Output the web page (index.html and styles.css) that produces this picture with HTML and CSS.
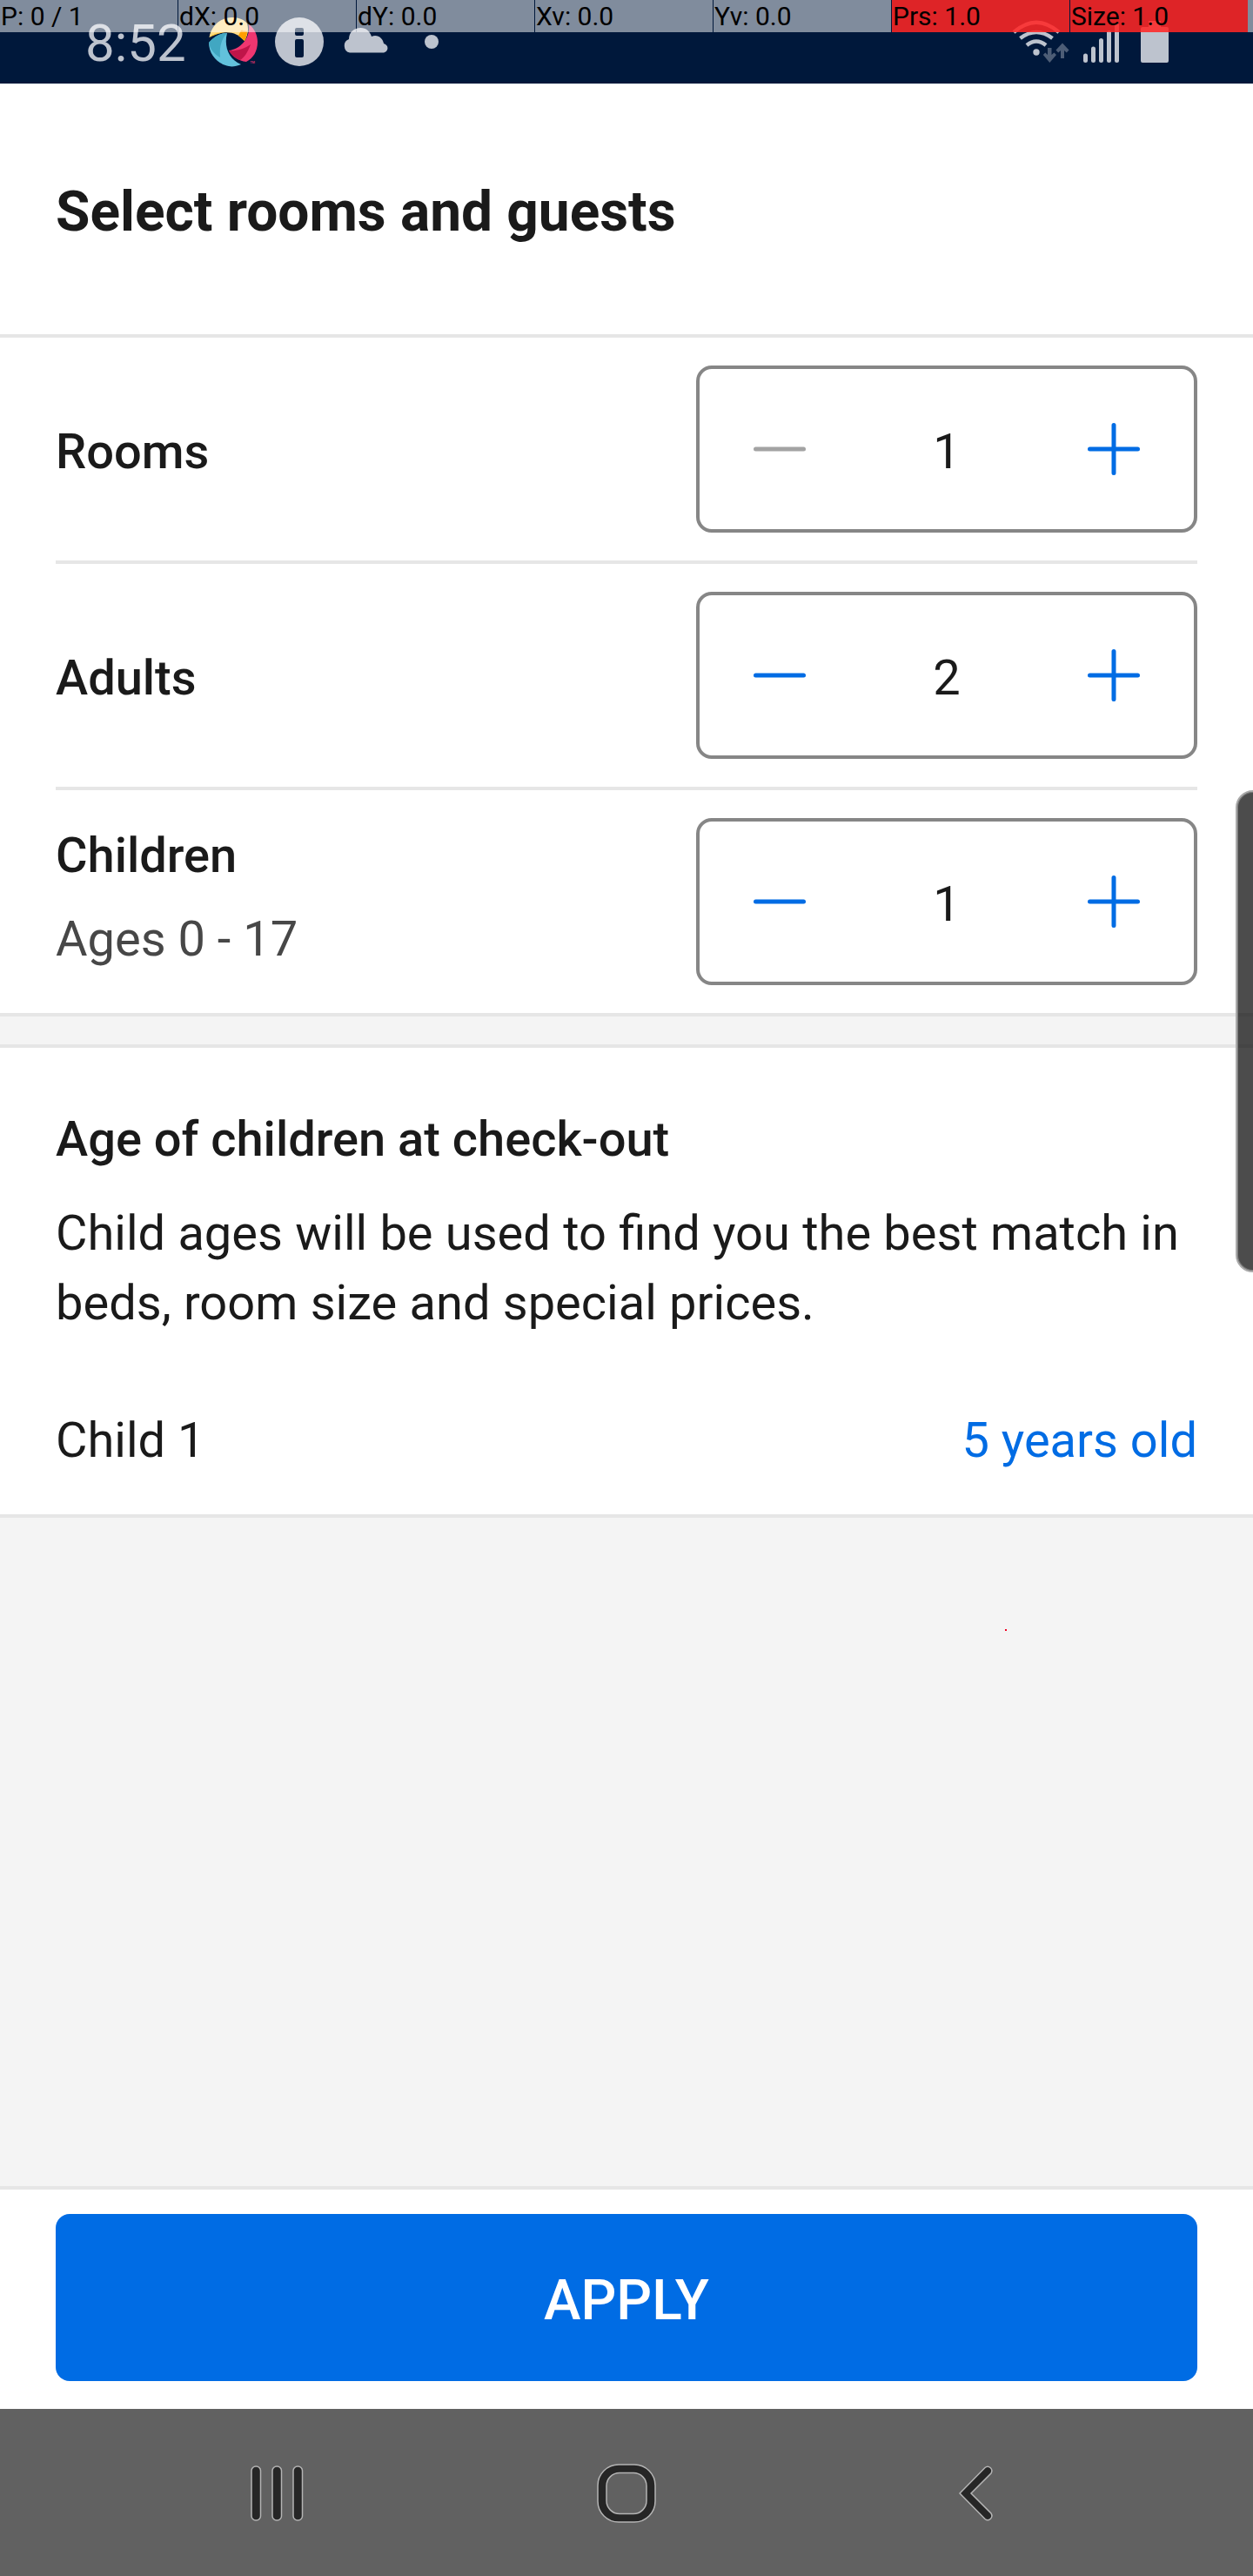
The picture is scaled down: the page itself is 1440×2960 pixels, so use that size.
FILE: index.html
```html
<!DOCTYPE html>
<html lang="en">
<head>
<meta charset="utf-8">
<title>Select rooms and guests</title>
<link rel="stylesheet" href="styles.css">
</head>
<body>
<div class="screen">
  <header class="status">
    <span class="clock">8:52</span>
    <svg class="ic-app" width="56" height="57" viewBox="240 20 56 57">
      <path fill="#ffdb84" d="M240.500 43C243 29 254 20 267 20C275 20 281 23 284 27C286 33 285 41 281 47C275 39 265 36 256 37.500C250 38.500 245 40.500 240.500 43Z"/>
      <path fill="#ffb914" d="M240.500 43C244 39 253 37 259 37C250 38 245 40.500 240.500 43ZM274 41C280 35 279 31 277 36L283 36C284 41 282 45 281 47Z"/>
      <path fill="#ff9e00" d="M274 41L277 35L284 36C284 41 282 45 281 47C279 44 277 42 274 41Z"/>
      <path fill="#ef3670" d="M286 28C293 33 296 41 296 48C296 59 291 67 283 71C274 70 267 65 263 58C275 57 288 45 286 28Z"/>
      <path fill="#bf1549" d="M263 58C269 59 280 57 288 51C285 60 280 67 276 69C270 67 266 63 263 58Z"/>
      <path fill="#62c1dc" d="M240 49C246 42 253 38 261 38C257 54 263 68 277 74C272 76 267 77 263 76C251 74 240 63 240 49Z"/>
      <path fill="#41a7c2" d="M240 49C246 42 253 38 261 38C254 45 252 55 253 66C246 62 241 56 240 49Z"/>
      <text class="tm" x="287.500" y="72.500">TM</text>
    </svg>
    <svg class="ic-info" width="56" height="56" viewBox="0 0 56 56">
      <circle cx="28" cy="28" r="28" fill="#bdc3ce"/>
      <path fill="#00183b" d="M25 12h6q2 0 2 2v5q0 2-2 2h-6q-2 0-2-2v-5q0-2 2-2ZM25 25h6q2 0 2 2v17q0 2-2 2h-6q-2 0-2-2v-17q0-2 2-2Z"/>
    </svg>
    <svg class="ic-cloud" width="52" height="29" viewBox="0 0 52 29"><path fill="#bdc3ce" d="M8 28.500A7.500 8 0 0 1 7 13C7 5 13 0 20.500 0C27 0 31 4 33 10C40 7 46 12 47 18C54 20 52 28.500 46 28.500Z"/></svg>
    <span class="more"></span>
    <svg class="ic-net" width="180" height="50" viewBox="1163 23 180 50">
      <g fill="none" stroke="#bdc3ce" stroke-width="4.500">
        <path d="M1165 37Q1191 14.500 1217 37"/><path d="M1172.500 44Q1191 30 1209.500 44"/><path d="M1180 52Q1191 43 1202 52"/>
      </g>
      <circle cx="1191" cy="60" r="3.700" fill="#bdc3ce"/>
      <path fill="#4d5d76" d="M1204 55h4.500v8l3-2.500 2.500 2.500-7.700 9-7.500-9 2.500-2.500 2.700 2.500ZM1219 67v-9l-2.800 2.500-2.700-3 7.500-8 7.500 8-2.700 3-2.800-2.500v9Z"/>
      <g stroke="#bdc3ce" stroke-width="5" stroke-linecap="round"><path d="M1247.500 64v5.500M1256.500 56v13.500M1265.500 46.500v23M1274.500 37.500v32M1283.500 29v40.500"/></g>
      <path fill="#bdc3ce" d="M1313 31h7v-7h14v7h7q2 0 2 2v37q0 2-2 2h-28q-2 0-2-2v-37q0-2 2-2Z"/>
    </svg>
    <div class="pointer-bar">
      <span>P: 0 / 1</span><span>dX: 0.0</span><span>dY: 0.0</span><span>Xv: 0.0</span><span>Yv: 0.0</span><span class="hot">Prs: 1.0</span><span class="hot">Size: 1.0</span><i></i>
    </div>
  </header>

  <main class="content">
    <h1 class="title">Select rooms and guests</h1>
    <section class="counters">
      <div class="row">
        <div class="label">Rooms</div>
        <div class="stepper">
          <svg class="btn off" width="60" height="60" viewBox="0 0 60 60"><path d="M2.500 30h55"/></svg>
          <span class="num">1</span>
          <svg class="btn" width="60" height="60" viewBox="0 0 60 60"><path d="M2.500 30h55M30 2.500v55"/></svg>
        </div>
      </div>
      <div class="row">
        <div class="label">Adults</div>
        <div class="stepper">
          <svg class="btn" width="60" height="60" viewBox="0 0 60 60"><path d="M2.500 30h55"/></svg>
          <span class="num">2</span>
          <svg class="btn" width="60" height="60" viewBox="0 0 60 60"><path d="M2.500 30h55M30 2.500v55"/></svg>
        </div>
      </div>
      <div class="row">
        <div class="label two">Children<span class="sub">Ages 0 - 17</span></div>
        <div class="stepper">
          <svg class="btn" width="60" height="60" viewBox="0 0 60 60"><path d="M2.500 30h55"/></svg>
          <span class="num">1</span>
          <svg class="btn" width="60" height="60" viewBox="0 0 60 60"><path d="M2.500 30h55M30 2.500v55"/></svg>
        </div>
      </div>
    </section>
    <section class="ages">
      <h2>Age of children at check-out</h2>
      <p>Child ages will be used to find you the best match in beds, room size and special prices.</p>
      <div class="child"><span>Child 1</span><a>5 years old</a></div>
    </section>
    <div class="spacer"></div>
    <footer class="action"><button class="apply">APPLY</button></footer>
  </main>

  <nav class="nav">
    <svg width="1440" height="192" viewBox="0 2768 1440 192">
      <g fill="#262626" stroke="#b4b4b4" stroke-width="1.500">
        <rect x="289" y="2834" width="10.500" height="62" rx="5"/>
        <rect x="313" y="2834" width="10.500" height="62" rx="5"/>
        <rect x="337" y="2834" width="10.500" height="62" rx="5"/>
        <path fill-rule="evenodd" d="M711 2832h18a24 24 0 0 1 24 24v18a24 24 0 0 1-24 24h-18a24 24 0 0 1-24-24v-18a24 24 0 0 1 24-24ZM712 2841.500a15 15 0 0 0-15 15v17a15 15 0 0 0 15 15h16a15 15 0 0 0 15-15v-17a15 15 0 0 0-15-15Z"/>
        <path d="M1103 2865L1132 2835.500C1136 2832 1142 2837 1139 2842L1116 2865L1139 2888C1142 2893 1136 2898 1132 2894.500Z"/>
      </g>
    </svg>
  </nav>
  <div class="edge-handle"></div>
  <div class="touch-dot"></div>
</div>
</body>
</html>
```
FILE: styles.css
```css
* { box-sizing: border-box; margin: 0; padding: 0; }
body { font-family: Roboto, "Liberation Sans", sans-serif; color: #1a1a1a; background: #fff; }
.screen { position: relative; width: 1440px; height: 2960px; display: flex; flex-direction: column; overflow: hidden; }
svg { display: block; flex: none; }

.status { position: relative; height: 96px; background: #00183b; display: flex; align-items: flex-start; padding-left: 98px; }
.clock { width: 142px; font-size: 60px; line-height: 70px; padding-top: 15px; color: #bdc3ce; }
.ic-app { margin-top: 20px; }
.tm { font-size: 3.5px; font-weight: 700; fill: #d8326c; }
.ic-info { margin: 20px 0 0 20px; }
.ic-cloud { margin: 32px 0 0 22px; }
.more { width: 16px; height: 16px; border-radius: 50%; background: #bdc3ce; margin: 40px 0 0 42px; }
.ic-net { margin: 23px 0 0 659px; }
.pointer-bar { position: absolute; left: 0; top: 0; width: 1440px; height: 37px; display: flex; gap: 1px; font-size: 30px; line-height: 37px; color: #000; }
.pointer-bar span { width: 204px; padding-left: 1px; background: rgba(255,255,255,.5); white-space: nowrap; }
.pointer-bar .hot { background: rgba(255,38,37,.87); }
.pointer-bar i { flex: 1; margin-left: -1px; background: rgba(255,255,255,.5); }

.content { height: 2672px; display: flex; flex-direction: column; }
.title { height: 292px; padding: 110px 64px 0; font-size: 64px; line-height: 76px; font-weight: 700; word-spacing: .3px; border-bottom: 4px solid #e6e6e6; }
.counters { padding: 0 64px; border-bottom: 4px solid #e6e6e6; }
.row { height: 260px; display: flex; justify-content: space-between; padding-top: 32px; border-bottom: 4px solid #e6e6e6; }
.row:last-child { height: 256px; border-bottom: 0; }
.label { font-size: 56px; line-height: 66px; font-weight: 500; padding-top: 66px; }
.label.two { padding-top: 10px; }
.sub { display: block; margin-top: 30px; font-weight: 400; color: #474747; }
.stepper { width: 576px; height: 192px; border: 4px solid #868686; border-radius: 18px; display: flex; align-items: center; justify-content: space-between; padding: 0 62px; }
.btn { fill: none; stroke: #006ce4; stroke-width: 5; stroke-linecap: round; }
.btn.off { stroke: #a3a3a3; }
.num { font-size: 56px; line-height: 66px; padding-top: 5px; }

.ages { margin-top: 32px; height: 544px; border: solid #e6e6e6; border-width: 4px 0; padding: 72px 64px 0; font-size: 56px; }
.ages h2 { font-size: 56px; line-height: 66px; font-weight: 500; }
.ages p { line-height: 80px; margin-top: 35px; word-spacing: .4px; }
.child { display: flex; justify-content: space-between; line-height: 80px; margin-top: 78px; }
.child a { color: #006ce4; }
.counters + .ages { box-shadow: 0 -32px #f4f4f4; }
.spacer { flex: 1; background: #f4f4f4; }
.action { height: 256px; border-top: 4px solid #e6e6e6; padding: 28px 64px 32px; }
.apply { width: 100%; height: 192px; border: 0; border-radius: 16px; background: #006ce4; color: #fff; font: 500 64px/76px Roboto, "Liberation Sans", sans-serif; padding-top: 8px; display: block; }

.nav { height: 192px; background: #616161; }
.edge-handle { position: absolute; left: 1420px; top: 908px; width: 40px; height: 554px; border-radius: 20px; border: 2px solid #aaa; box-shadow: inset 0 0 0 1px #777; background: rgba(0,0,0,.7); }
.touch-dot { position: absolute; left: 1155px; top: 1872px; width: 2px; height: 2px; background: #f00020; }
```
